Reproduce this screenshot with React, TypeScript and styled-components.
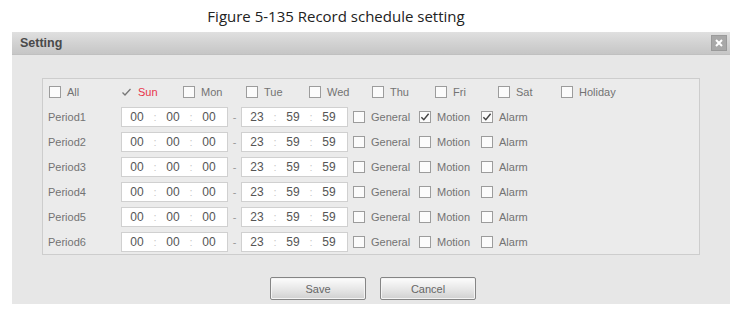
import styled, { createGlobalStyle } from "styled-components";

const GlobalStyle = createGlobalStyle`
    body {
        margin: 0;
        background: #ffffff;
        font-family: "Liberation Sans", Arial, sans-serif;
    }
`;

const Page = styled.div`
    width: 741px;
    height: 312px;
    overflow: hidden;
`;

const Caption = styled.div`
    height: 32px;
    width: 672px;
    display: flex;
    align-items: center;
    justify-content: center;
    font-family: "Open Sans", Lato, sans-serif;
    font-size: 15px;
    color: #222;
    padding-bottom: 1px;
    box-sizing: border-box;
`;

const Dialog = styled.div`
    margin-left: 12px;
    width: 718px;
    height: 272px;
    background: #e7e7e7;
    display: flex;
    flex-direction: column;
`;

const Header = styled.div`
    height: 22px;
    display: flex;
    align-items: center;
    justify-content: space-between;
    padding: 0 3px 0 8px;
    background: linear-gradient(#e0e0e0, #d2d2d2 50%, #c6c6c6);
    border-bottom: 1px solid #c0c0c0;
`;

const HeaderTitle = styled.span`
    font-size: 12.5px;
    font-weight: bold;
    color: #4a4a4a;
`;

const CloseButton = styled.div`
    width: 16px;
    height: 16px;
    background: #a8a8a8;
    border: 1px solid #9a9a9a;
    box-sizing: border-box;
    display: flex;
    align-items: center;
    justify-content: center;
`;

const Body = styled.div`
    padding: 23px 0 0 30px;
    flex: 1;
    display: flex;
    flex-direction: column;
    align-items: flex-start;
`;

const Panel = styled.div`
    width: 658px;
    height: 177px;
    flex: none;
    box-sizing: border-box;
    border: 1px solid #cdcdcd;
    background: #ebebeb;
    display: flex;
    flex-direction: column;
`;

const DayRow = styled.div`
    height: 25px;
    display: grid;
    grid-template-columns: 71px repeat(8, 63px);
    align-items: center;
    padding-left: 6px;
`;

const Option = styled.label<{ $red?: boolean }>`
    display: flex;
    align-items: center;
    gap: 6px;
    font-size: 11px;
    color: ${p => (p.$red ? "#e8344a" : "#737373")};
`;

const Box = styled.span`
    width: 12px;
    height: 12px;
    box-sizing: border-box;
    border: 1px solid #9c9c9c;
    background: #fbfbfb;
    display: inline-flex;
    align-items: center;
    justify-content: center;
    flex: none;
`;

const Tick = styled.span`
    width: 12px;
    height: 12px;
    display: inline-flex;
    align-items: center;
    justify-content: center;
    flex: none;
`;

const PeriodRow = styled.div`
    height: 25px;
    display: flex;
    align-items: center;
    padding-left: 5px;
`;

const PeriodLabel = styled.span`
    width: 73px;
    font-size: 11px;
    color: #737373;
`;

const TimeBox = styled.div`
    width: 107px;
    height: 20px;
    box-sizing: border-box;
    border: 1px solid #d0d0d0;
    background: #fff;
    display: flex;
    align-items: center;
    padding-left: 2px;
`;

const Field = styled.span`
    width: 26px;
    text-align: center;
    font-size: 12px;
    color: #555;
`;

const Colon = styled.span`
    width: 10px;
    text-align: center;
    font-size: 11px;
    color: #c8c8c8;
`;

const Dash = styled.span`
    width: 13px;
    text-align: center;
    font-size: 11px;
    color: #999;
`;

const Modes = styled.div`
    display: grid;
    grid-template-columns: 66px 62px 80px;
    margin-left: 5px;
`;

const Footer = styled.div`
    display: flex;
    gap: 14px;
    padding: 22px 0 0 228px;
`;

const Button = styled.button`
    width: 96px;
    height: 23px;
    border: 1px solid #858585;
    border-radius: 2px;
    background: linear-gradient(#fdfdfd, #e6e6e6 55%, #d0d0d0);
    box-shadow: inset 0 0 0 1px #f4f4f4;
    font-family: "Liberation Sans", Arial, sans-serif;
    font-size: 11px;
    color: #666;
    padding: 0;
`;

const Check = () => (
    <svg width="11" height="10" viewBox="0 0 11 10">
        <path d="M1.5 5.2 L4.2 8 L9.5 1.5" fill="none" stroke="#444" strokeWidth="1.6" />
    </svg>
);

const CheckBox = ({ checked }: { checked?: boolean }) => <Box>{checked && <Check />}</Box>;

const days = ["Mon", "Tue", "Wed", "Thu", "Fri", "Sat", "Holiday"];

const TimeInput = ({ parts }: { parts: string[] }) => (
    <TimeBox>
        <Field>{parts[0]}</Field>
        <Colon>:</Colon>
        <Field>{parts[1]}</Field>
        <Colon>:</Colon>
        <Field>{parts[2]}</Field>
    </TimeBox>
);

export default function App() {
    return (
        <Page>
            <GlobalStyle />
            <Caption>Figure 5-135 Record schedule setting</Caption>
            <Dialog>
                <Header>
                    <HeaderTitle>Setting</HeaderTitle>
                    <CloseButton>
                        <svg width="8" height="8" viewBox="0 0 8 8">
                            <path d="M1 1 L7 7 M7 1 L1 7" stroke="#fff" strokeWidth="2" />
                        </svg>
                    </CloseButton>
                </Header>
                <Body>
                    <Panel>
                        <DayRow>
                            <Option><CheckBox />All</Option>
                            <Option $red>
                                <Tick>
                                    <svg width="11" height="10" viewBox="0 0 11 10">
                                        <path d="M1.5 5.5 L4 8 L9.5 2" fill="none" stroke="#777" strokeWidth="1.3" />
                                    </svg>
                                </Tick>
                                Sun
                            </Option>
                            {days.map(d => (
                                <Option key={d}><CheckBox />{d}</Option>
                            ))}
                        </DayRow>
                        {[1, 2, 3, 4, 5, 6].map(n => (
                            <PeriodRow key={n}>
                                <PeriodLabel>Period{n}</PeriodLabel>
                                <TimeInput parts={["00", "00", "00"]} />
                                <Dash>-</Dash>
                                <TimeInput parts={["23", "59", "59"]} />
                                <Modes>
                                    <Option><CheckBox />General</Option>
                                    <Option><CheckBox checked={n === 1} />Motion</Option>
                                    <Option><CheckBox checked={n === 1} />Alarm</Option>
                                </Modes>
                            </PeriodRow>
                        ))}
                    </Panel>
                    <Footer>
                        <Button>Save</Button>
                        <Button>Cancel</Button>
                    </Footer>
                </Body>
            </Dialog>
        </Page>
    );
}
